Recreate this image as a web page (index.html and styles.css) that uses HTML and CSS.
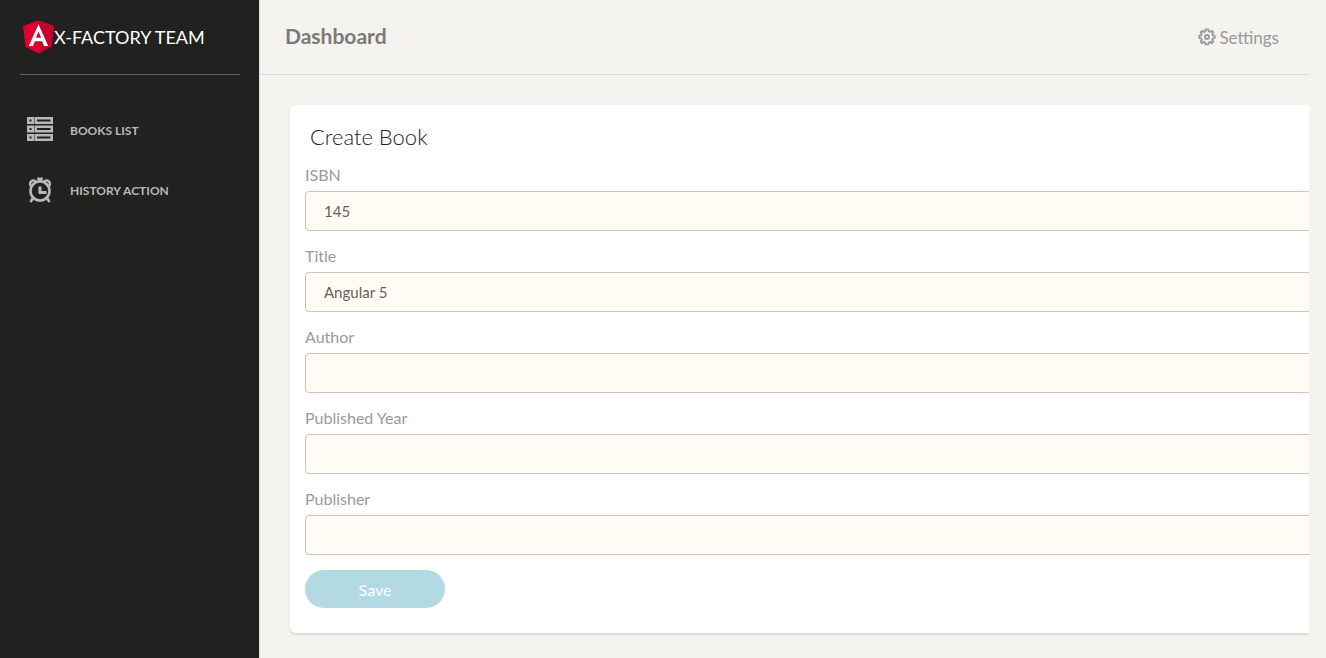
FILE: index.html
```html
<!DOCTYPE html>
<html lang="en">
<head>
<meta charset="utf-8">
<title>Dashboard</title>
<link rel="stylesheet" href="styles.css">
</head>
<body>
<div class="wrapper">
  <aside class="sidebar">
    <a class="brand" href="#">
      <svg class="brand-logo" viewBox="0 0 32 34" aria-hidden="true">
        <path fill="#dd0031" d="M16 0 0 5.700l2.500 21.300L16 34l13.500-7L32 5.700z"/>
        <path fill="#c3002f" d="M16 0v34l13.500-7L32 5.700z"/>
        <path fill="#fff" fill-rule="evenodd" d="M16 3.800 6 26.300h4.300l2-4.900h7.400l2 4.900H26zM16 11.200l2.700 6.700h-5.400z"/>
      </svg>
      <span>X-FACTORY TEAM</span>
    </a>
    <nav class="menu">
      <a class="menu-item" href="#">
        <svg class="menu-icon" viewBox="0 0 28 28" aria-hidden="true">
          <path fill="currentColor" fill-rule="evenodd" d="M1 1h7v7H1zM8.500 1H27v7H8.500zM3.500 3.500v2h2v-2zM11 3.500v2h13.500v-2zM1 9.500h7v7H1zM8.500 9.500H27v7H8.500zM3.500 12v2h2v-2zM11 12v2h13.500v-2zM1 18h7v7H1zM8.500 18H27v7H8.500zM3.500 20.500v2h2v-2zM11 20.500v2h13.500v-2z"/>
        </svg>
        <span>BOOKS LIST</span>
      </a>
      <a class="menu-item" href="#">
        <svg class="menu-icon" viewBox="0 0 28 28" fill="none" stroke="currentColor" stroke-width="2.400" aria-hidden="true">
          <circle cx="14" cy="15" r="9.500" stroke-width="2.600"/>
          <path d="M14 3v3M11.300 3h5.400" stroke-width="3"/>
          <path d="M4.700 10C2.900 6.500 5.500 3.500 9.500 5L10.500 6.500M23.300 10C25.100 6.500 22.500 3.500 18.500 5L17.500 6.500"/>
          <path d="M7 22l-2.500 4M21 22l2.500 4" stroke-width="2.600"/>
          <path d="M14 10.500v6h6.500" stroke-width="3"/>
        </svg>
        <span>HISTORY ACTION</span>
      </a>
    </nav>
  </aside>
  <main class="main-panel">
    <header class="topbar">
      <a class="topbar-title" href="#">Dashboard</a>
      <a class="settings" href="#">
        <svg class="settings-icon" viewBox="0 0 18 18" fill="none" stroke="currentColor" stroke-width="1.900" stroke-linejoin="round" aria-hidden="true">
          <path d="M7.600 1.400h2.800l.4 2 1.400.6 1.700-1.200 1.500 1.500-1.200 1.700.6 1.400 1.900.4v2.300l-1.900.4-.6 1.400 1.200 1.700-1.500 1.500-1.700-1.200-1.400.6-.4 1.900H7.600l-.4-1.900-1.400-.6-1.700 1.200-1.500-1.500 1.200-1.700-.6-1.400-1.900-.4V7.800l1.900-.4.6-1.400-1.200-1.700 1.500-1.500 1.700 1.200 1.400-.6z"/>
          <circle cx="9" cy="9" r="2"/>
        </svg>
        <span>Settings</span>
      </a>
    </header>
    <section class="card">
      <h1 class="card-title">Create Book</h1>
      <form class="book-form">
        <div class="form-group">
          <label for="isbn">ISBN</label>
          <input class="form-control" id="isbn" type="text" value="145">
        </div>
        <div class="form-group">
          <label for="title">Title</label>
          <input class="form-control" id="title" type="text" value="Angular 5">
        </div>
        <div class="form-group">
          <label for="author">Author</label>
          <input class="form-control" id="author" type="text">
        </div>
        <div class="form-group">
          <label for="year">Published Year</label>
          <input class="form-control" id="year" type="text">
        </div>
        <div class="form-group">
          <label for="publisher">Publisher</label>
          <input class="form-control" id="publisher" type="text">
        </div>
        <button class="save" type="submit" disabled>Save</button>
      </form>
    </section>
  </main>
</div>
</body>
</html>
```
FILE: styles.css
```css
* {
  box-sizing: border-box;
}

body {
  margin: 0;
  background: #f4f3ef;
  font-family: Lato, "Open Sans", sans-serif;
  font-size: 16px;
}

a {
  color: inherit;
  text-decoration: none;
}

.wrapper {
  display: flex;
  min-height: 100vh;
}

.sidebar {
  flex: none;
  width: 260px;
  padding: 0 19px 0 20px;
  background: #212120;
  border-right: 1px solid #dddddd;
}

.brand {
  display: flex;
  align-items: center;
  height: 75px;
  padding-left: 3px;
  border-bottom: 1px solid #66615b;
  color: #ffffff;
  font-size: 18px;
}

.brand-logo {
  width: 31px;
  height: 34px;
}

.menu {
  display: flex;
  flex-direction: column;
  gap: 12px;
  padding: 31px 6px;
}

.menu-item {
  display: flex;
  align-items: center;
  gap: 16px;
  height: 48px;
  color: #b9b9b8;
  font-size: 12px;
  font-weight: 700;
}

.menu-icon {
  width: 28px;
  height: 28px;
}

.main-panel {
  flex: 1;
  min-width: 0;
  margin-right: 17px;
  overflow: hidden;
}

.topbar {
  display: flex;
  align-items: center;
  justify-content: space-between;
  height: 75px;
  padding: 0 30px 0 25px;
  border-bottom: 1px solid #dddddd;
}

.topbar-title {
  padding-bottom: 4px;
  color: #7a7a78;
  font-size: 21px;
  font-weight: 700;
}

.settings {
  display: flex;
  align-items: center;
  gap: 3px;
  color: #9a9a98;
  font-size: 17px;
}

.settings-icon {
  width: 18px;
  height: 18px;
}

.card {
  margin: 30px -30px 25px 30px;
  padding: 19px 15px 25px;
  background: #ffffff;
  border-radius: 6px;
  box-shadow: 0 2px 2px rgba(204, 197, 185, 0.5);
}

.card-title {
  margin: 0 0 15px;
  padding-left: 5px;
  color: #252422;
  font-size: 22px;
  font-weight: 300;
  line-height: 26px;
}

.form-group {
  margin-bottom: 15px;
}

.form-group label {
  display: block;
  height: 26px;
  color: #9a9a9a;
  line-height: 20px;
}

.form-control {
  display: block;
  width: 100%;
  height: 40px;
  padding: 0 18px;
  background: #fffcf5;
  border: 1px solid #ccc5b9;
  border-radius: 4px;
  color: #66615b;
  font: inherit;
  font-size: 15px;
}

.save {
  display: block;
  width: 140px;
  height: 38px;
  padding: 0;
  background: #b3d9e2;
  border: 0;
  border-radius: 20px;
  color: #ffffff;
  font: inherit;
}
```
